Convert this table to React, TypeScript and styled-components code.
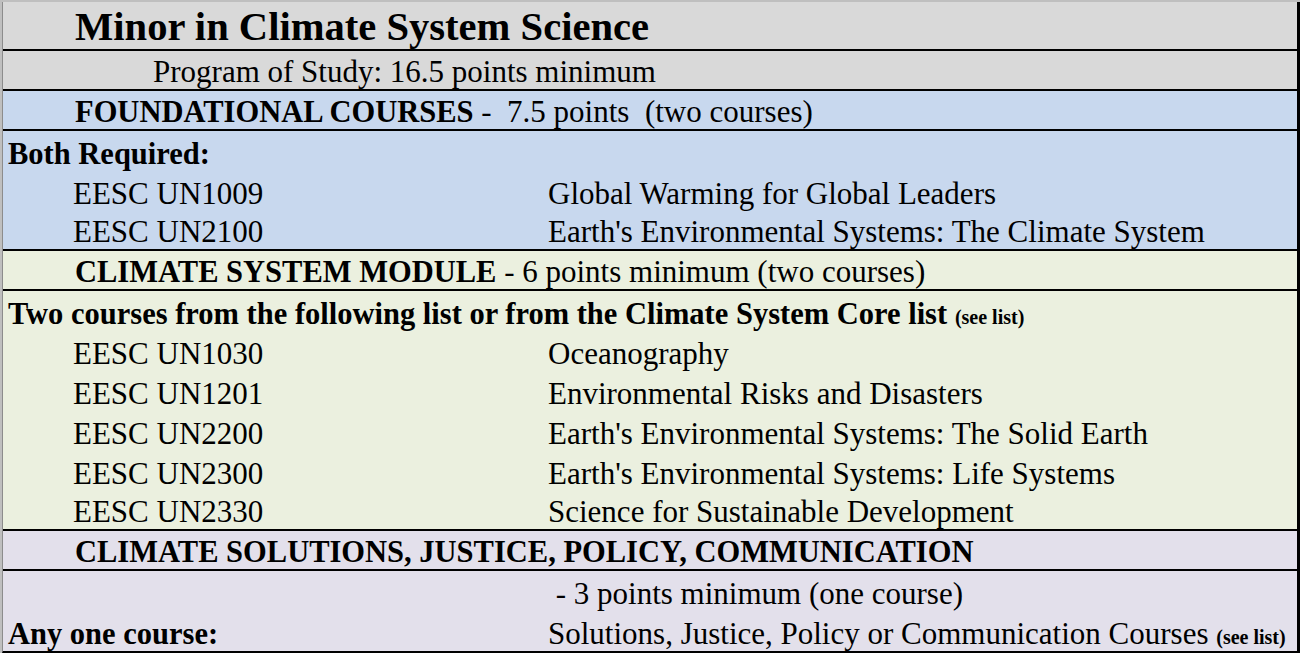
import * as React from 'react'
import styled, { createGlobalStyle } from 'styled-components'

const GlobalStyle = createGlobalStyle`
  html, body {
    margin: 0;
    padding: 0;
    background: #ffffff;
  }
  body {
    font-family: "Liberation Serif", "Times New Roman", serif;
    color: #000;
  }
`

const colors = {
  gray: '#d9d9d9',
  blue: '#c8d8ee',
  green: '#ebf0df',
  purple: '#e3e0eb',
}

type Tone = keyof typeof colors

const Sheet = styled.div`
  width: 1300px;
  box-sizing: border-box;
  padding: 2px 0 0 2px;
  background: #bfbfbf;
`

const Table = styled.div`
  display: flex;
  flex-direction: column;
  border-left: 1px solid #8c8c8c;
  border-right: 3px solid #000;
  border-bottom: 2px solid #000;
`

const Section = styled.section<{ $tone: Tone }>`
  display: flex;
  flex-direction: column;
  background: ${p => colors[p.$tone]};
`

const Row = styled.div<{ $h?: number; $rule?: boolean }>`
  display: grid;
  grid-template-columns: 545px 1fr;
  align-items: end;
  height: ${p => p.$h ?? 40}px;
  box-sizing: border-box;
  padding-bottom: 2px;
  border-bottom: ${p => (p.$rule ? '2px solid #000' : 'none')};
  font-size: 31px;
  line-height: 30px;
  white-space: pre;
`

const Wide = styled.div<{ $indent: number }>`
  grid-column: 1 / -1;
  padding-left: ${p => p.$indent}px;
`

const Title = styled(Wide)`
  font-size: 40.6px;
  line-height: 40px;
  font-weight: 700;
`

const Code = styled.div`
  padding-left: 70px;
`

const Desc = styled.div``

const Strong = styled.b`
  font-size: 30.5px;
  font-weight: 700;
`

const Note = styled.b`
  font-size: 20px;
  line-height: 1;
  font-weight: 700;
`

const Label = styled.div`
  padding-left: 5px;
  font-size: 30.5px;
  font-weight: 700;
`

type Course = { code: string; title: string }

const foundational: Course[] = [
  { code: 'EESC UN1009', title: 'Global Warming for Global Leaders' },
  { code: 'EESC UN2100', title: "Earth's Environmental Systems: The Climate System" },
]

const module: Course[] = [
  { code: 'EESC UN1030', title: 'Oceanography' },
  { code: 'EESC UN1201', title: 'Environmental Risks and Disasters' },
  { code: 'EESC UN2200', title: "Earth's Environmental Systems: The Solid Earth" },
  { code: 'EESC UN2300', title: "Earth's Environmental Systems: Life Systems" },
  { code: 'EESC UN2330', title: 'Science for Sustainable Development' },
]

const CourseRows = ({ list }: { list: Course[] }) => (
  <>
    {list.map((c, i) => (
      <Row key={c.code} $rule={i === list.length - 1}>
        <Code>{c.code}</Code>
        <Desc>{c.title}</Desc>
      </Row>
    ))}
  </>
)

export default function App() {
  return (
    <>
      <GlobalStyle />
      <Sheet>
        <Table>
          <Section $tone="gray">
            <Row $h={49} $rule>
              <Title $indent={72}>Minor in Climate System Science</Title>
            </Row>
            <Row $rule>
              <Wide $indent={150}>Program of Study: 16.5 points minimum</Wide>
            </Row>
          </Section>

          <Section $tone="blue">
            <Row $rule>
              <Wide $indent={72}>
                <Strong>FOUNDATIONAL COURSES</Strong> -  7.5 points  (two courses)
              </Wide>
            </Row>
            <Row>
              <Label>Both Required:</Label>
            </Row>
            <CourseRows list={foundational} />
          </Section>

          <Section $tone="green">
            <Row $rule>
              <Wide $indent={72}>
                <Strong>CLIMATE SYSTEM MODULE</Strong> - 6 points minimum (two courses)
              </Wide>
            </Row>
            <Row>
              <Wide $indent={5}>
                <Strong>Two courses from the following list or from the Climate System Core list</Strong>{' '}
                <Note>(see list)</Note>
              </Wide>
            </Row>
            <CourseRows list={module} />
          </Section>

          <Section $tone="purple">
            <Row $rule>
              <Wide $indent={72}>
                <Strong>CLIMATE SOLUTIONS, JUSTICE, POLICY, COMMUNICATION</Strong>
              </Wide>
            </Row>
            <Row>
              <div />
              <Desc> - 3 points minimum (one course)</Desc>
            </Row>
            <Row>
              <Label>Any one course:</Label>
              <Desc>
                Solutions, Justice, Policy or Communication Courses <Note>(see list)</Note>
              </Desc>
            </Row>
          </Section>
        </Table>
      </Sheet>
    </>
  )
}
